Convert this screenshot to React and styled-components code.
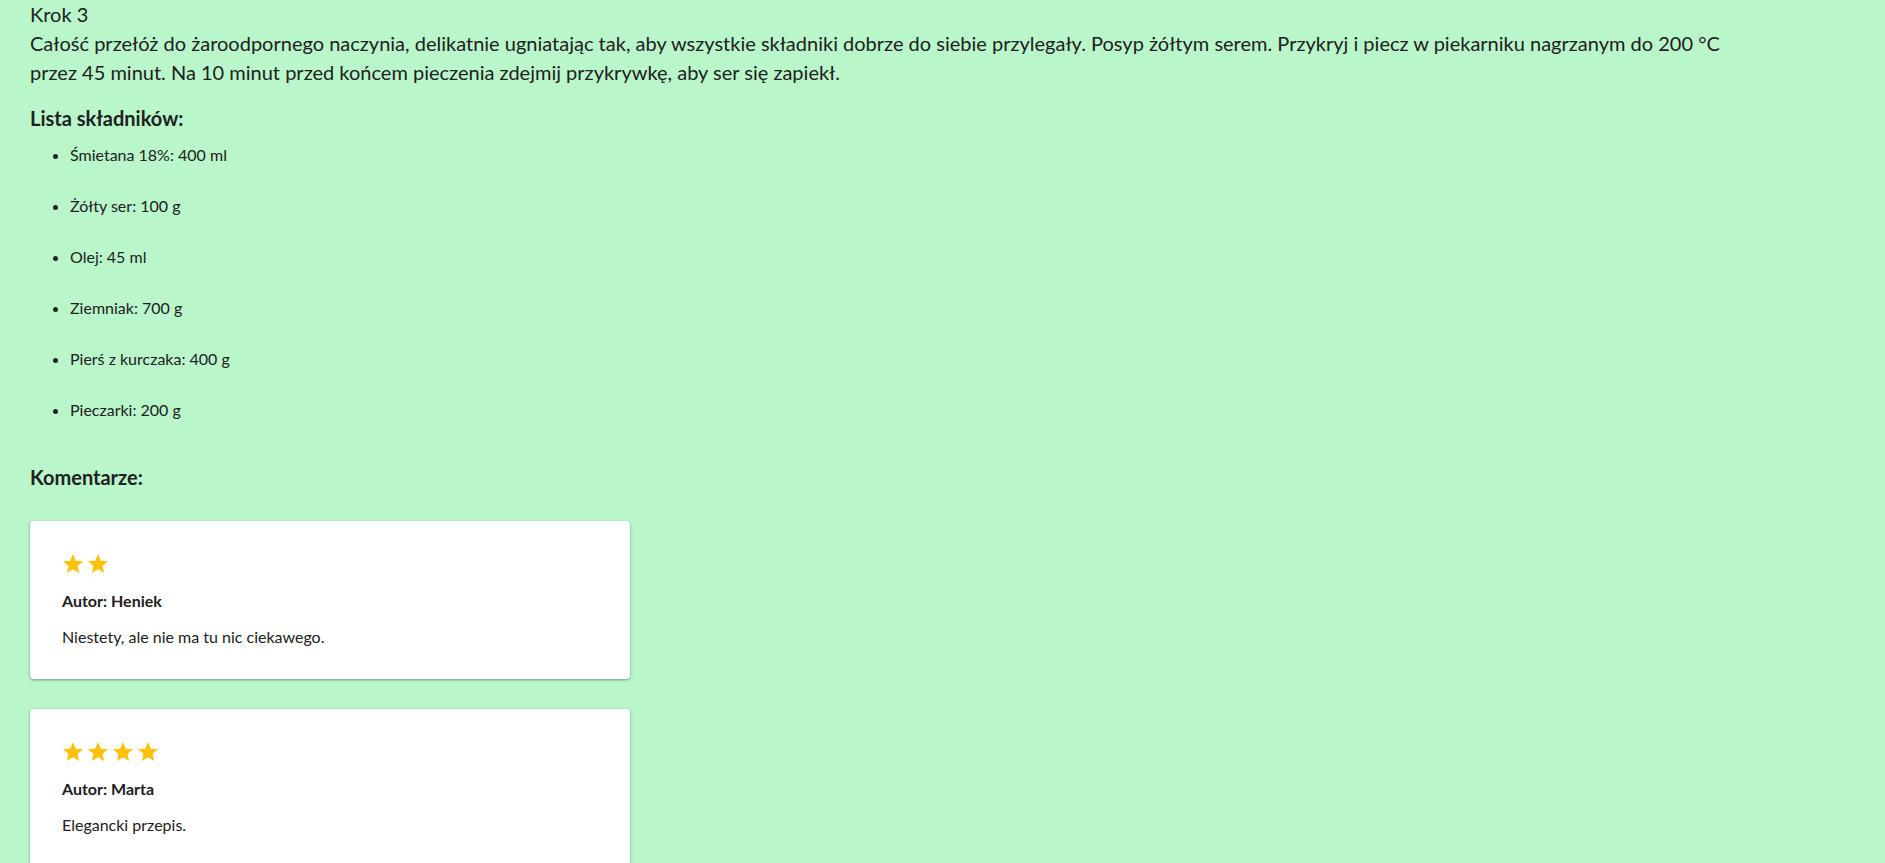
import React from 'react';
import styled, { createGlobalStyle } from 'styled-components';

const GlobalStyle = createGlobalStyle`
  html, body {
    margin: 0;
    padding: 0;
    background-color: #b9f6ca;
  }
  body {
    font-family: Lato, "Noto Sans", sans-serif;
    color: #212121;
  }
`;

const Page = styled.div`
  padding: 0 30px 40px 30px;
  min-height: 863px;
  box-sizing: border-box;
`;

const StepTitle = styled.div`
  font-size: 20px;
  line-height: 29px;
`;

const StepText = styled.p`
  margin: 0;
  max-width: 1715px;
  font-size: 20px;
  line-height: 29px;
`;

const SectionTitle = styled.h3`
  margin: ${props => props.top}px 0 0 0;
  font-size: 20px;
  font-weight: 700;
  line-height: 24px;
`;

const IngredientList = styled.ul`
  margin: 15px 0 0 0;
  padding-left: 40px;
  font-size: 16px;
`;

const Ingredient = styled.li`
  line-height: 19px;
  margin-bottom: 32px;

  &:last-child {
    margin-bottom: 0;
  }
`;

const Comments = styled.div`
  display: flex;
  flex-direction: column;
  gap: 30px;
  margin-top: 32px;
`;

const Card = styled.div`
  width: 600px;
  box-sizing: border-box;
  background: #ffffff;
  border-radius: 4px;
  box-shadow: 0 1px 3px rgba(0, 0, 0, 0.35);
  padding: 31px 32px 32px 32px;
`;

const Stars = styled.div`
  display: flex;
  gap: 1px;
  height: 24px;
  margin-left: -1px;
`;

const Author = styled.div`
  margin-top: 15px;
  font-size: 16px;
  font-weight: 700;
  line-height: 20px;
`;

const CommentText = styled.p`
  margin: 16px 0 0 0;
  font-size: 16px;
  line-height: 20px;
`;

const Star = () => (
  <svg width="24" height="24" viewBox="0 0 24 24">
    <path
      fill="#ffc107"
      d="M12 17.27L18.18 21l-1.64-7.03L22 9.24l-7.19-.61L12 2 9.19 8.63 2 9.24l5.46 4.73L5.82 21z"
    />
  </svg>
);

const ingredients = [
  'Śmietana 18%: 400 ml',
  'Żółty ser: 100 g',
  'Olej: 45 ml',
  'Ziemniak: 700 g',
  'Pierś z kurczaka: 400 g',
  'Pieczarki: 200 g',
];

const comments = [
  { stars: 2, author: 'Heniek', text: 'Niestety, ale nie ma tu nic ciekawego.' },
  { stars: 4, author: 'Marta', text: 'Elegancki przepis.' },
];

const App = () => (
  <>
    <GlobalStyle />
    <Page>
      <StepTitle>Krok 3</StepTitle>
      <StepText>
        Całość przełóż do żaroodpornego naczynia, delikatnie ugniatając tak, aby wszystkie składniki dobrze do siebie przylegały. Posyp żółtym serem. Przykryj i piecz w piekarniku nagrzanym do 200 °C przez 45 minut. Na 10 minut przed końcem pieczenia zdejmij przykrywkę, aby ser się zapiekł.
      </StepText>
      <SectionTitle top={19}>Lista składników:</SectionTitle>
      <IngredientList>
        {ingredients.map(item => (
          <Ingredient key={item}>{item}</Ingredient>
        ))}
      </IngredientList>
      <SectionTitle top={46}>Komentarze:</SectionTitle>
      <Comments>
        {comments.map(c => (
          <Card key={c.author}>
            <Stars>
              {Array.from({ length: c.stars }).map((_, i) => (
                <Star key={i} />
              ))}
            </Stars>
            <Author>Autor: {c.author}</Author>
            <CommentText>{c.text}</CommentText>
          </Card>
        ))}
      </Comments>
    </Page>
  </>
);

export default App;
